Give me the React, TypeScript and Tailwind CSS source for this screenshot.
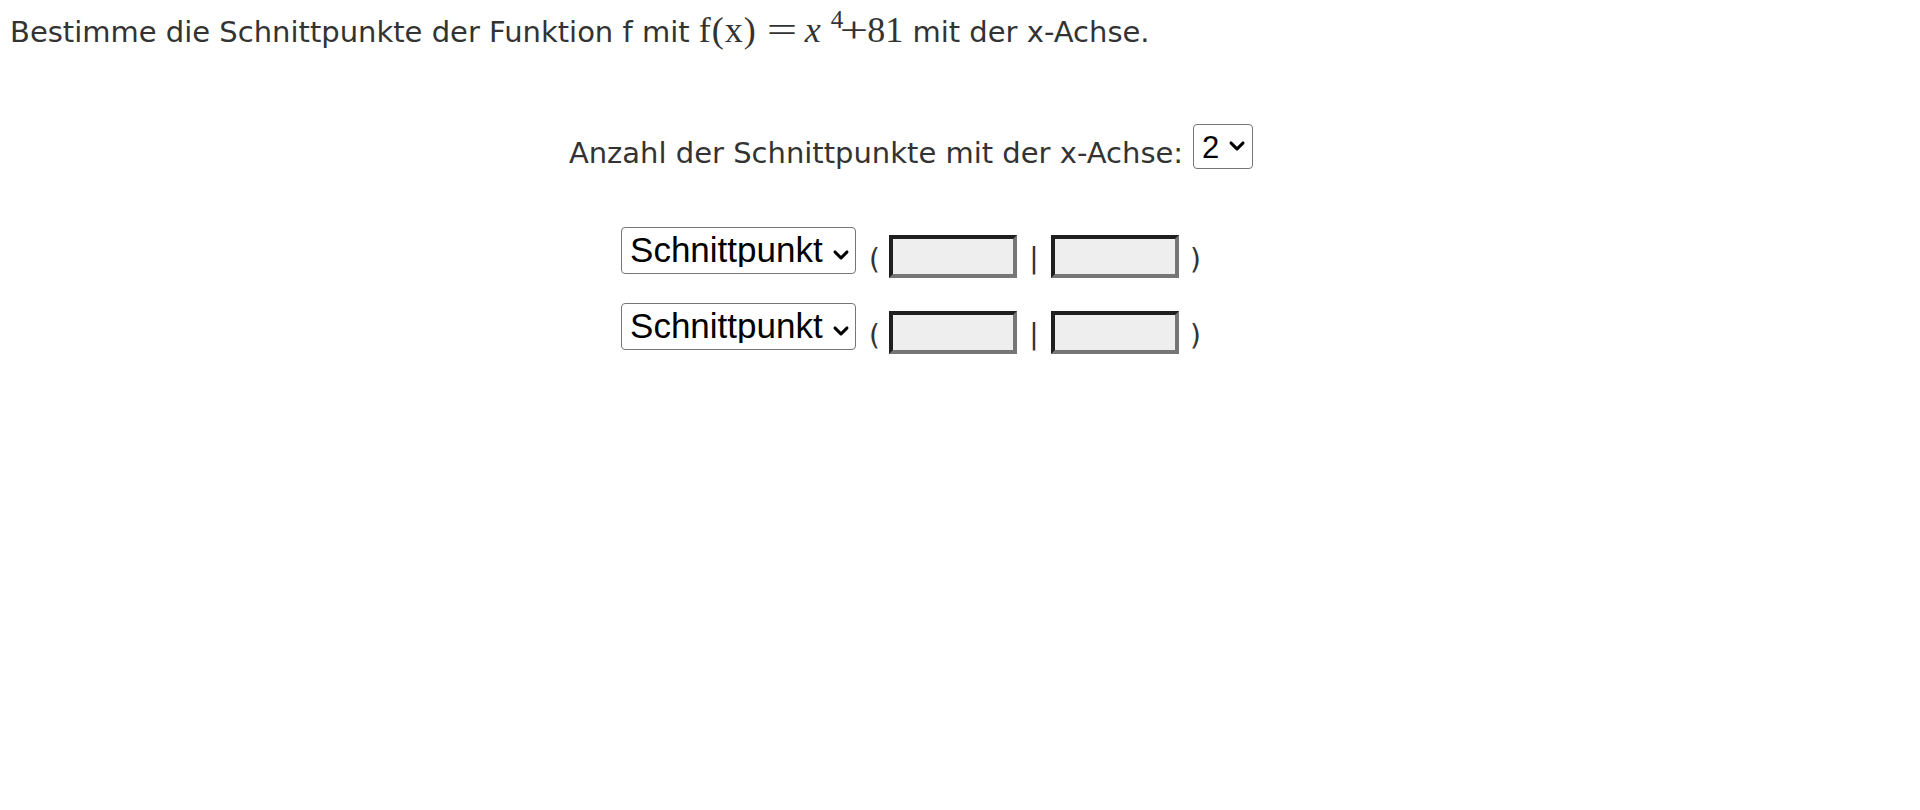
import React from 'react';

const Chevron: React.FC<{ className: string }> = ({ className }) => (
  <svg viewBox="0 0 16 9" className={className} fill="none" preserveAspectRatio="none">
    <polyline points="2,1.8 8,7.2 14,1.8" stroke="#000" strokeWidth="2.8" strokeLinecap="round" strokeLinejoin="round" />
  </svg>
);

function PointSelect() {
  return (
    <div className="relative shrink-0">
      <select
        defaultValue="s"
        className="appearance-none w-[235px] h-[47px] pl-[8px] pb-[2px] border border-[#767676] rounded-[4px] bg-white text-black text-[35px] font-['Liberation_Sans',Arial,sans-serif] outline-none"
      >
        <option value="s">Schnittpunkt</option>
        <option value="b">Berührpunkt</option>
      </select>
      <Chevron className="absolute left-[212px] top-[23px] w-[16px] h-[10px] pointer-events-none" />
    </div>
  );
}

function CoordInput() {
  return (
    <input
      type="text"
      className="shrink-0 w-[128px] h-[43px] mt-[8px] bg-[#eeeeee] border-[4px] border-t-[#1f1f1f] border-l-[#1f1f1f] border-b-[#767676] border-r-[#767676] outline-none"
    />
  );
}

function PointRow() {
  return (
    <div className="flex items-start text-[28px] leading-none text-[#333]">
      <PointSelect />
      <span className="ml-[13px] w-[20px] mt-[19px]">(</span>
      <CoordInput />
      <span className="w-[34px] mt-[18px] text-center">|</span>
      <CoordInput />
      <span className="ml-[11px] mt-[19px]">)</span>
    </div>
  );
}

export default function App() {
  return (
    <div className="min-h-[810px] bg-white text-[#333] font-['DejaVu_Sans',Verdana,sans-serif]">
      <p className="h-[48px] pl-[10px] pt-[15px] text-[29px] leading-[34px] whitespace-nowrap">
        Bestimme die Schnittpunkte der Funktion f mit{' '}
        <span className="font-['Liberation_Serif',serif] text-[36px] leading-[20px] tracking-[1px]">f(x)</span>
        <span className="inline-block ml-[10px] w-[30px] text-center scale-x-[1.5] font-['Liberation_Serif',serif] text-[36px] leading-[20px]">=</span>
        <span className="ml-[8px] italic font-['Liberation_Serif',serif] text-[36px] leading-[20px]">x</span>
        <span className="relative -top-[14px] ml-[10px] font-['Liberation_Serif',serif] text-[25px] leading-[20px]">4</span>
        <span className="inline-block -ml-[2px] w-[26px] text-center scale-x-[1.4] font-['Liberation_Serif',serif] text-[36px] leading-[20px]">+</span>
        <span className="font-['Liberation_Serif',serif] text-[36px] leading-[20px]">81</span> mit der x-Achse.
      </p>

      <div className="w-[1822px] flex flex-col items-center">
        <div className="mt-[76px] flex items-start">
          <span className="mt-[12px] text-[29px] leading-[34px] whitespace-nowrap">
            Anzahl der Schnittpunkte mit der x-Achse:
          </span>
          <div className="relative ml-[10px] shrink-0">
            <select
              defaultValue="2"
              className="appearance-none w-[60px] h-[45px] pl-[8px] pb-[8px] border border-[#767676] rounded-[4px] bg-white text-black text-[31px] font-['Liberation_Sans',Arial,sans-serif] outline-none"
            >
              <option value="0">0</option>
              <option value="1">1</option>
              <option value="2">2</option>
              <option value="3">3</option>
              <option value="4">4</option>
            </select>
            <Chevron className="absolute left-[36px] top-[17px] w-[16px] h-[10px] pointer-events-none" />
          </div>
        </div>

        <div className="mt-[57px] flex flex-col gap-[25px]">
          <PointRow />
          <PointRow />
        </div>
      </div>
    </div>
  );
}
